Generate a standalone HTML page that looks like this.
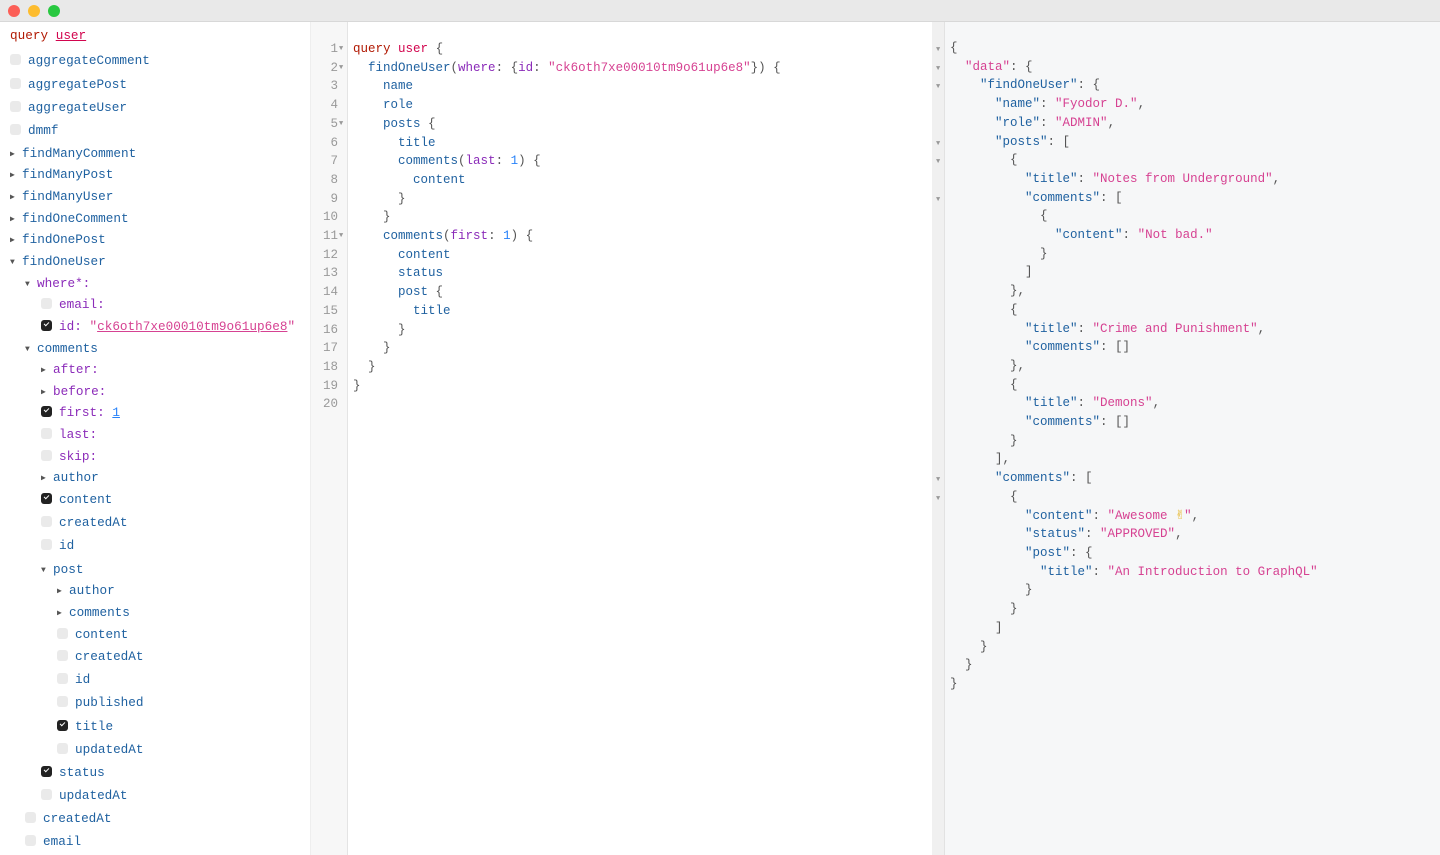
<!DOCTYPE html>
<html><head><meta charset="utf-8"><style>
*{margin:0;padding:0;box-sizing:border-box}
body{width:1440px;height:855px;overflow:hidden;background:#fff;font-family:"Liberation Mono",monospace;font-size:12.5px;position:relative}
.bar{position:absolute;left:0;top:0;width:1440px;height:22px;background:#e9e9e9;border-bottom:1px solid #d8d8d8}
.dot{position:absolute;top:5px;width:12px;height:12px;border-radius:50%}
.r{position:absolute;white-space:pre;line-height:16px;height:16px}
.L .r{font-size:12.7px;margin-top:1px}
.cb{display:inline-block;width:11px;height:11px;border-radius:3px;background:#eaeaea;vertical-align:-1px;margin-right:7px}
.ck{background:#222;position:relative}
.ck:after{content:"";position:absolute;left:3px;top:2px;width:4px;height:2px;border-left:1.5px solid #fff;border-bottom:1.5px solid #fff;transform:rotate(-45deg)}
.ar{display:inline-block;width:12px;font-size:8px;color:#555;vertical-align:1px}
.f{color:#1f61a0}.a{color:#8b2bb9}.s{color:#d64292}.k{color:#b11a04}.n{color:#2882f9}.p{color:#555}
.gut{position:absolute;left:310px;top:22px;width:38px;height:833px;background:#f7f7f7;border-left:1px solid #eee;border-right:1px solid #e4e4e4}
.ln{position:absolute;left:310px;width:28px;text-align:right;color:#999;white-space:pre;line-height:16px}
.res{position:absolute;left:932px;top:22px;width:508px;height:833px;background:#f6f7f8;border-left:1px solid #e0e0e0}
.rg{position:absolute;left:932px;top:22px;width:13px;height:833px;background:#f0f0f0;border-right:1px solid #e2e2e2}
</style></head><body>
<div class="bar"><div class="dot" style="left:8px;background:#fc5f57"></div><div class="dot" style="left:28px;background:#fdbc2e"></div><div class="dot" style="left:48px;background:#28c840"></div></div>
<div class="L">
<div class="r" style="left:10px;top:27px"><span class="k">query</span> <span style="color:#d2054e;text-decoration:underline">user</span></div>
<div class="r" style="left:10px;top:52px"><span class="cb"></span><span class="f">aggregateComment</span></div>
<div class="r" style="left:10px;top:76px"><span class="cb"></span><span class="f">aggregatePost</span></div>
<div class="r" style="left:10px;top:99px"><span class="cb"></span><span class="f">aggregateUser</span></div>
<div class="r" style="left:10px;top:122px"><span class="cb"></span><span class="f">dmmf</span></div>
<div class="r" style="left:10px;top:145px"><span class="ar">▶</span><span class="f">findManyComment</span></div>
<div class="r" style="left:10px;top:166px"><span class="ar">▶</span><span class="f">findManyPost</span></div>
<div class="r" style="left:10px;top:188px"><span class="ar">▶</span><span class="f">findManyUser</span></div>
<div class="r" style="left:10px;top:210px"><span class="ar">▶</span><span class="f">findOneComment</span></div>
<div class="r" style="left:10px;top:231px"><span class="ar">▶</span><span class="f">findOnePost</span></div>
<div class="r" style="left:10px;top:253px"><span class="ar">▼</span><span class="f">findOneUser</span></div>
<div class="r" style="left:25px;top:275px"><span class="ar">▼</span><span class="a">where*:</span></div>
<div class="r" style="left:41px;top:296px"><span class="cb"></span><span class="a">email:</span></div>
<div class="r" style="left:41px;top:318px"><span class="cb ck"></span><span class="a">id:</span> <span class="s">"<u>ck6oth7xe00010tm9o61up6e8</u>"</span></div>
<div class="r" style="left:25px;top:340px"><span class="ar">▼</span><span class="f">comments</span></div>
<div class="r" style="left:41px;top:361px"><span class="ar">▶</span><span class="a">after:</span></div>
<div class="r" style="left:41px;top:383px"><span class="ar">▶</span><span class="a">before:</span></div>
<div class="r" style="left:41px;top:404px"><span class="cb ck"></span><span class="a">first:</span> <span class="n"><u>1</u></span></div>
<div class="r" style="left:41px;top:426px"><span class="cb"></span><span class="a">last:</span></div>
<div class="r" style="left:41px;top:448px"><span class="cb"></span><span class="a">skip:</span></div>
<div class="r" style="left:41px;top:469px"><span class="ar">▶</span><span class="f">author</span></div>
<div class="r" style="left:41px;top:491px"><span class="cb ck"></span><span class="f">content</span></div>
<div class="r" style="left:41px;top:514px"><span class="cb"></span><span class="f">createdAt</span></div>
<div class="r" style="left:41px;top:537px"><span class="cb"></span><span class="f">id</span></div>
<div class="r" style="left:41px;top:561px"><span class="ar">▼</span><span class="f">post</span></div>
<div class="r" style="left:57px;top:582px"><span class="ar">▶</span><span class="f">author</span></div>
<div class="r" style="left:57px;top:604px"><span class="ar">▶</span><span class="f">comments</span></div>
<div class="r" style="left:57px;top:626px"><span class="cb"></span><span class="f">content</span></div>
<div class="r" style="left:57px;top:648px"><span class="cb"></span><span class="f">createdAt</span></div>
<div class="r" style="left:57px;top:671px"><span class="cb"></span><span class="f">id</span></div>
<div class="r" style="left:57px;top:694px"><span class="cb"></span><span class="f">published</span></div>
<div class="r" style="left:57px;top:718px"><span class="cb ck"></span><span class="f">title</span></div>
<div class="r" style="left:57px;top:741px"><span class="cb"></span><span class="f">updatedAt</span></div>
<div class="r" style="left:41px;top:764px"><span class="cb ck"></span><span class="f">status</span></div>
<div class="r" style="left:41px;top:787px"><span class="cb"></span><span class="f">updatedAt</span></div>
<div class="r" style="left:25px;top:810px"><span class="cb"></span><span class="f">createdAt</span></div>
<div class="r" style="left:25px;top:833px"><span class="cb"></span><span class="f">email</span></div>
</div>

<div class="gut"></div>
<div class="ln" style="top:40px;line-height:18.7px;font-size:12.5px">1
2
3
4
5
6
7
8
9
10
11
12
13
14
15
16
17
18
19
20</div>
<div class="r" style="left:339px;top:40px;line-height:18.7px;height:auto;font-size:7px;color:#999">▼
▼


▼





▼</div>
<div class="r" style="left:353px;top:40px;line-height:18.7px;height:auto"><span class="k">query</span> <span style="color:#d2054e">user</span> <span class="p">{</span>
  <span class="f">findOneUser</span><span class="p">(</span><span class="a">where</span><span class="p">: {</span><span class="a">id</span><span class="p">:</span> <span class="s">"ck6oth7xe00010tm9o61up6e8"</span><span class="p">}) {</span>
    <span class="f">name</span>
    <span class="f">role</span>
    <span class="f">posts</span> <span class="p">{</span>
      <span class="f">title</span>
      <span class="f">comments</span><span class="p">(</span><span class="a">last</span><span class="p">:</span> <span class="n">1</span><span class="p">) {</span>
        <span class="f">content</span>
      <span class="p">}</span>
    <span class="p">}</span>
    <span class="f">comments</span><span class="p">(</span><span class="a">first</span><span class="p">:</span> <span class="n">1</span><span class="p">) {</span>
      <span class="f">content</span>
      <span class="f">status</span>
      <span class="f">post</span> <span class="p">{</span>
        <span class="f">title</span>
      <span class="p">}</span>
    <span class="p">}</span>
  <span class="p">}</span>
<span class="p">}</span>
</div>

<div class="res"></div>
<div class="rg"></div>
<div class="r" style="left:936px;top:41px;line-height:18.7px;height:auto;font-size:7px;color:#999">▼
▼
▼


▼
▼

▼














▼
▼</div>
<div class="r p" style="left:950px;top:39px;line-height:18.7px;height:auto">{
  <span class="s">"data"</span>: {
    <span class="f">"findOneUser"</span>: {
      <span class="f">"name"</span>: <span class="s">"Fyodor D."</span>,
      <span class="f">"role"</span>: <span class="s">"ADMIN"</span>,
      <span class="f">"posts"</span>: [
        {
          <span class="f">"title"</span>: <span class="s">"Notes from Underground"</span>,
          <span class="f">"comments"</span>: [
            {
              <span class="f">"content"</span>: <span class="s">"Not bad."</span>
            }
          ]
        },
        {
          <span class="f">"title"</span>: <span class="s">"Crime and Punishment"</span>,
          <span class="f">"comments"</span>: []
        },
        {
          <span class="f">"title"</span>: <span class="s">"Demons"</span>,
          <span class="f">"comments"</span>: []
        }
      ],
      <span class="f">"comments"</span>: [
        {
          <span class="f">"content"</span>: <span class="s">"Awesome <span style="color:#e6b422;font-size:15px;line-height:10px">✌</span>"</span>,
          <span class="f">"status"</span>: <span class="s">"APPROVED"</span>,
          <span class="f">"post"</span>: {
            <span class="f">"title"</span>: <span class="s">"An Introduction to GraphQL"</span>
          }
        }
      ]
    }
  }
}</div>
</body></html>
